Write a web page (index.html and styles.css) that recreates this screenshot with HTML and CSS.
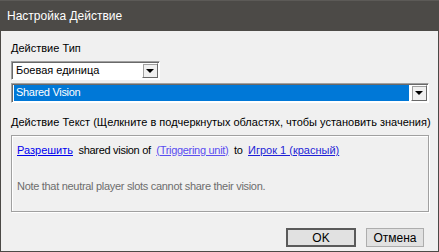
FILE: index.html
```html
<!DOCTYPE html>
<html lang="ru">

<head>
  <meta charset="UTF-8" />
  <title>Настройка Действие</title>
  <link rel="stylesheet" href="styles.css">
</head>

<body>
  <div class="dialog">
    <div class="titlebar">Настройка Действие</div>

    <div class="content">
      <label class="label label-type">Действие Тип</label>
      <div class="combo combo-small">
        <span class="combo-value">Боевая единица</span>
        <span class="combo-btn"><span class="arrow"></span></span>
      </div>
      <div class="combo combo-wide">
        <span class="combo-value selected">Shared Vision</span>
        <span class="combo-btn"><span class="arrow"></span></span>
      </div>

      <label class="label label-text">Действие Текст (Щелкните в подчеркнутых областях, чтобы установить значения)</label>
      <div class="text-box">
        <p class="sentence">
          <a href="#" class="link link-main">Разрешить</a>&nbsp; shared vision of &nbsp;<a href="#" class="link link-unit">(Triggering unit)</a>&nbsp; to &nbsp;<a href="#" class="link link-player">Игрок 1 (красный)</a>
        </p>
        <p class="note">Note that neutral player slots cannot share their vision.</p>
      </div>

      <div class="buttons">
        <button class="btn btn-default">OK</button>
        <button class="btn btn-cancel">Отмена</button>
      </div>
    </div>
  </div>
</body>

</html>
```

FILE: styles.css
```css
* {
  box-sizing: border-box;
  margin: 0;
  padding: 0;
}

body {
  font-family: 'Liberation Sans', Arial, sans-serif;
  font-size: 11px;
  letter-spacing: -0.3px;
  color: #000;
  background: #f0f0f0;
}

.dialog {
  width: 439px;
  height: 252px;
  display: flex;
  flex-direction: column;
  border: 1px solid #4b4946;
  border-top: none;
  background: #f0f0f0;
}

.titlebar {
  height: 31px;
  background: #4c4a47;
  border-top: 1px solid #5c5a57;
  color: #fff;
  font-size: 12px;
  letter-spacing: 0;
  padding: 8px 0 0 7px;
  margin: 0 -1px;
}

.content {
  flex: 1;
  padding: 11px 9px 0 10px;
  display: flex;
  flex-direction: column;
}

.label {
  display: block;
  height: 13px;
  line-height: 13px;
  white-space: nowrap;
  letter-spacing: 0;
}

.label-text {
  margin-top: 13px;
}

.combo {
  display: flex;
  height: 19px;
  background: #fff;
  border: 1px solid;
  border-color: #a0a0a0 #fff #fff #a0a0a0;
  box-shadow: inset 1px 1px 0 #696969;
  padding: 1px 1px 1px 2px;
}

.combo-small {
  width: 149px;
  margin-top: 6px;
  letter-spacing: 0;
}

.combo-wide {
  width: 418px;
  height: 20px;
  margin-top: 3px;
}

.combo-value {
  flex: 1;
  line-height: 15px;
  padding-left: 2px;
}

.combo-value.selected {
  background: #0078d7;
  color: #fff;
  margin-right: 2px;
}

.combo-btn {
  width: 16px;
  background: #f0f0f0;
  border: 1px solid;
  border-color: #fff #696969 #696969 #fff;
  box-shadow: 1px 1px 0 #a0a0a0 inset;
  display: flex;
  align-items: center;
  justify-content: center;
}

.arrow {
  width: 0;
  height: 0;
  border-left: 4px solid transparent;
  border-right: 4px solid transparent;
  border-top: 4px solid #000;
}

.text-box {
  margin-top: 6px;
  width: 418px;
  height: 77px;
  border: 1px solid #a0a0a0;
  box-shadow: inset 1px 1px 0 #fff, 1px 1px 0 #fff;
  padding: 8px 0 0 5px;
}

.sentence {
  line-height: 13px;
  white-space: nowrap;
}

.link {
  text-decoration: underline;
}

.link-main {
  color: #0000ee;
  letter-spacing: 0;
}

.link-unit {
  color: #5a4ef0;
}

.link-player {
  color: #1f1fd6;
  letter-spacing: 0;
}

.note {
  margin-top: 23px;
  color: #6d6d6d;
  line-height: 13px;
}

.buttons {
  margin-top: auto;
  margin-bottom: 4px;
  display: flex;
  justify-content: flex-end;
  gap: 10px;
  padding-right: 5px;
}

.btn {
  font-family: inherit;
  font-size: 12px;
  height: 19px;
  background: #e1e1e1;
  border: 1px solid #adadad;
  color: #000;
}

.btn-default {
  width: 70px;
  border: 2px solid #5a5a5a;
}

.btn-cancel {
  width: 58px;
}
```
